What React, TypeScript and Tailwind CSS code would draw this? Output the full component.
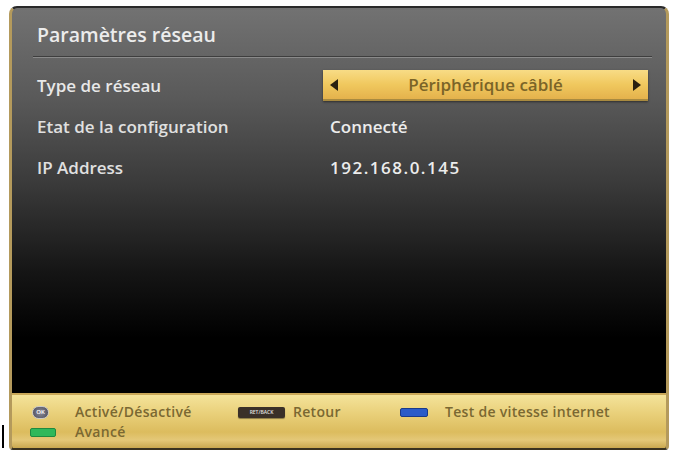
import React from "react";

export default function App() {
  const font = { fontFamily: '"Open Sans", "DejaVu Sans", sans-serif' };
  return (
    <div className="w-[673px] h-[451px] bg-white relative overflow-hidden" style={font}>
      <div className="absolute left-[2px] top-[425px] w-[2px] h-[23px] bg-black" />
      <div className="ml-[9px] pt-[6px] w-[660px]">
        <div className="h-[444px] rounded-t-[8px] rounded-b-[4px] border-t-[2px] border-t-[#2a2a2a] border-x-[3px] border-x-[#b49a5c] border-b-[2px] border-b-[#3a3320] flex flex-col overflow-hidden bg-[linear-gradient(to_bottom,#727272_0%,#5a5a5a_20%,#3a3a3a_40%,#151515_60%,#000000_75%,#000000_100%)]">
          <div className="flex-1 pl-[24px] pt-[14px]">
            <div className="text-[19.5px] font-semibold text-[#ececec] leading-[26px] pl-[1px]">Paramètres réseau</div>
            <div className="mt-[8px] h-[2px] bg-[#3e3e3e] border-b border-[#8a8a8a] mr-[14px] ml-[-3px]" />
            <div className="mt-[12px] flex items-center h-[31px]">
              <div className="w-[287px] shrink-0 pl-[1px] text-[17px] font-semibold text-[#e8e8e8]">Type de réseau</div>
              <div className="w-[325px] shrink-0 h-[31px] flex items-center justify-between px-[7px] bg-[linear-gradient(to_bottom,#f8dc86_0%,#f0c85e_50%,#e4b24c_100%)] border-b-[2px] border-[#a88a40] shadow-[0_1px_2px_rgba(0,0,0,0.5)]">
                <span className="w-0 h-0 border-y-[6px] border-y-transparent border-r-[8px] border-r-[#2a2010]" />
                <span className="text-[17px] font-semibold text-[#7a6428]">Périphérique câblé</span>
                <span className="w-0 h-0 border-y-[6px] border-y-transparent border-l-[8px] border-l-[#2a2010]" />
              </div>
            </div>
            <div className="mt-[10px] flex items-center h-[31px]">
              <div className="w-[294px] shrink-0 pl-[1px] text-[17px] font-semibold text-[#e0e0e0]">Etat de la configuration</div>
              <div className="text-[17px] font-semibold text-[#ececec]">Connecté</div>
            </div>
            <div className="mt-[10px] flex items-center h-[31px]">
              <div className="w-[294px] shrink-0 pl-[1px] text-[17px] font-semibold text-[#e0e0e0]">IP Address</div>
              <div className="text-[17px] font-semibold tracking-[1.5px] text-[#ececec]">192.168.0.145</div>
            </div>
          </div>
          <div className="h-[55px] shrink-0 bg-[linear-gradient(to_bottom,#f4e39a_0%,#e9d07a_35%,#dcbc5e_70%,#e4c878_85%,#c9a850_100%)] border-t-[2px] border-t-[#caa858] pl-[18px] pt-[7px] text-[14px] font-semibold tracking-[0.3px] text-[#7a6832] leading-[20px]">
            <div className="flex items-center">
              <div className="w-[45px] shrink-0 flex items-center pl-[2px]">
                <span className="w-[17px] h-[13px] rounded-full bg-[radial-gradient(circle,#8a8a96_0%,#5e5e6c_70%,#3c3c48_100%)] border border-[#c9c9c9] text-[6px] tracking-normal text-white flex items-center justify-center leading-none">OK</span>
              </div>
              <span className="w-[163px] shrink-0">Activé/Désactivé</span>
              <span className="w-[47px] shrink-0 h-[11px] rounded-[2px] bg-[#3a3028] text-[5px] tracking-normal text-[#e0e0e0] flex items-center justify-center leading-none shadow-[0_1px_1px_rgba(0,0,0,0.4)]">RET/BACK</span>
              <span className="ml-[8px] w-[107px] shrink-0">Retour</span>
              <span className="w-[28px] shrink-0 h-[9px] rounded-[2px] bg-[#2a5bc8] border border-[#1a3a8a]" />
              <span className="ml-[17px]">Test de vitesse internet</span>
            </div>
            <div className="flex items-center">
              <div className="w-[45px] shrink-0 flex items-center">
                <span className="w-[26px] h-[9px] rounded-[2px] bg-[#2fb85a] border border-[#1e8a40]" />
              </div>
              <span>Avancé</span>
            </div>
          </div>
        </div>
      </div>
    </div>
  );
}
